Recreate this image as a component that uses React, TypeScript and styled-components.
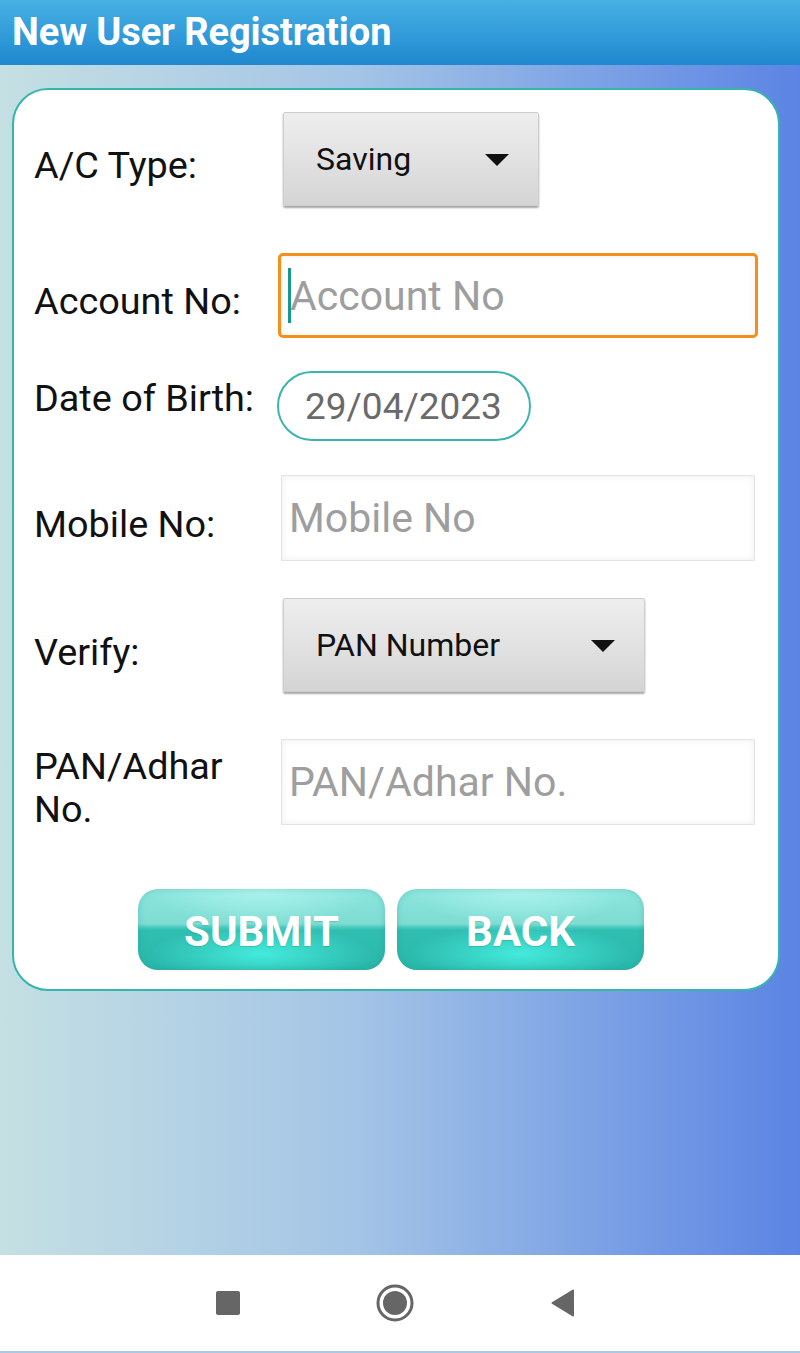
import React from 'react'
import styled, { createGlobalStyle } from 'styled-components'

const GlobalStyle = createGlobalStyle`
    html, body {
        margin: 0;
        padding: 0;
    }
    body {
        font-family: Roboto, 'Noto Sans', sans-serif;
    }
`

const Screen = styled.div`
    width: 800px;
    height: 1353px;
    display: flex;
    flex-direction: column;
    overflow: hidden;
`

const Header = styled.header`
    height: 65px;
    flex-shrink: 0;
    background: linear-gradient(to bottom, #47b1e4 0%, #2f98d8 60%, #1f88cf 100%);
    display: flex;
    align-items: center;
    padding-left: 12px;
    box-sizing: border-box;
`

const Title = styled.h1`
    margin: 0;
    color: white;
    font-size: 38px;
    font-weight: 700;
    letter-spacing: -0.1px;
    line-height: 1;
    padding-bottom: 2px;
`

const Main = styled.main`
    flex: 1;
    background: linear-gradient(to right, #c4e0e3 0%, #a3c4e6 45%, #5b84e4 100%);
    padding-top: 23px;
    padding-left: 12px;
    box-sizing: border-box;
`

const Card = styled.section`
    width: 768px;
    box-sizing: border-box;
    background: white;
    border: 2px solid #36b5ad;
    border-radius: 36px;
    padding: 22px 0 19px 20px;
`

const Row = styled.div<{ $top: number }>`
    display: grid;
    grid-template-columns: 247px auto;
    align-items: center;
    margin-top: ${p => p.$top}px;
`

const Label = styled.div<{ $shift: number }>`
    font-size: 37.8px;
    line-height: 43px;
    color: #111;
    position: relative;
    top: ${p => p.$shift}px;
`

const Spinner = styled.div<{ $width: number }>`
    width: ${p => p.$width}px;
    height: 94px;
    margin-left: 2px;
    box-sizing: border-box;
    border: 1px solid #cdcdcd;
    border-radius: 2px;
    background: linear-gradient(to bottom, #eeeeee 0%, #e2e2e2 50%, #d4d4d4 100%);
    box-shadow: 0 2px 2px rgba(0, 0, 0, 0.35);
    display: flex;
    align-items: center;
    justify-content: space-between;
    padding: 0 29px 0 32px;
    font-size: 32px;
    color: #111;
`

const Arrow = styled.span`
    width: 0;
    height: 0;
    border-left: 12px solid transparent;
    border-right: 12px solid transparent;
    border-top: 12px solid #111;
    margin-top: 2px;
`

const TextBox = styled.div<{ $focused?: boolean }>`
    width: ${p => (p.$focused ? 480 : 474)}px;
    height: ${p => (p.$focused ? 85 : 86)}px;
    margin-left: ${p => (p.$focused ? -3 : 0)}px;
    box-sizing: border-box;
    border: ${p => (p.$focused ? '3px solid #f48f1a' : '1px solid #e3e3e3')};
    border-radius: ${p => (p.$focused ? 5 : 1)}px;
    box-shadow: inset 0 0 7px rgba(0, 0, 0, 0.07);
    background: white;
    display: flex;
    align-items: center;
    padding-left: 7px;
    font-size: 41px;
    color: #9e9e9e;
`

const Caret = styled.span`
    width: 3px;
    height: 55px;
    background: #14998a;
    margin-right: -1px;
    flex-shrink: 0;
`

const DatePill = styled.div`
    width: 254px;
    height: 70px;
    margin-left: -4px;
    box-sizing: border-box;
    border: 2px solid #3ab4ae;
    border-radius: 35px;
    display: flex;
    align-items: center;
    padding-left: 26px;
    font-size: 37px;
    color: #6a6a6a;
`

const ButtonRow = styled.div`
    display: flex;
    gap: 12px;
    margin-top: 64px;
    padding-left: 104px;
`

const GlossButton = styled.button`
    width: 247px;
    height: 81px;
    border: none;
    border-radius: 20px;
    font-family: Roboto, sans-serif;
    font-size: 42px;
    font-weight: 700;
    color: white;
    text-shadow: 0 1px 1px rgba(0, 0, 0, 0.12);
    background:
        radial-gradient(ellipse 45% 35% at 50% 80%, rgba(70, 240, 225, 0.9) 0%, rgba(70, 240, 225, 0) 100%),
        radial-gradient(ellipse 45% 45% at 50% 0%, rgba(180, 248, 240, 0.8) 0%, rgba(180, 248, 240, 0) 100%),
        linear-gradient(to bottom, #8ce6de 0%, #7edcd3 43%, #4ccbbf 47%, #30beb1 51%, #2ab8ab 100%);
    box-shadow: inset 0 0 6px rgba(20, 120, 110, 0.25);
    padding: 4px 0 0;
    cursor: pointer;
`

const NavBar = styled.nav`
    height: 98px;
    flex-shrink: 0;
    background: white;
    display: flex;
    align-items: center;
    padding-left: 216px;
    gap: 136px;
    box-sizing: border-box;
    border-bottom: 2px solid #a9c8ea;
`

const RecentKey = styled.span`
    width: 24px;
    height: 24px;
    border-radius: 2px;
    background: #666;
`

const HomeKey = () => (
    <svg width="38" height="38" viewBox="0 0 38 38">
        <circle cx="19" cy="19" r="17" fill="none" stroke="#666" strokeWidth="3" />
        <circle cx="19" cy="19" r="12" fill="#666" />
    </svg>
)

const BackKey = () => (
    <svg width="25" height="28" viewBox="0 0 25 28">
        <path d="M23 1.5 L2.5 14 L23 26.5 Z" fill="#666" stroke="#666" strokeWidth="2" strokeLinejoin="round" />
    </svg>
)

export default function App() {
    return (
        <Screen>
            <GlobalStyle />
            <Header>
                <Title>New User Registration</Title>
            </Header>
            <Main>
                <Card>
                    <Row $top={0}>
                        <Label $shift={6}>A/C Type:</Label>
                        <Spinner $width={256}>
                            Saving
                            <Arrow />
                        </Spinner>
                    </Row>
                    <Row $top={47}>
                        <Label $shift={6}>Account No:</Label>
                        <TextBox $focused>
                            <Caret />
                            Account No
                        </TextBox>
                    </Row>
                    <Row $top={33}>
                        <Label $shift={-8}>Date of Birth:</Label>
                        <DatePill>29/04/2023</DatePill>
                    </Row>
                    <Row $top={34}>
                        <Label $shift={6}>Mobile No:</Label>
                        <TextBox>Mobile No</TextBox>
                    </Row>
                    <Row $top={37}>
                        <Label $shift={7}>Verify:</Label>
                        <Spinner $width={362}>
                            PAN Number
                            <Arrow />
                        </Spinner>
                    </Row>
                    <Row $top={47}>
                        <Label $shift={6}>PAN/Adhar No.</Label>
                        <TextBox>PAN/Adhar No.</TextBox>
                    </Row>
                    <ButtonRow>
                        <GlossButton>SUBMIT</GlossButton>
                        <GlossButton>BACK</GlossButton>
                    </ButtonRow>
                </Card>
            </Main>
            <NavBar>
                <RecentKey />
                <HomeKey />
                <BackKey />
            </NavBar>
        </Screen>
    )
}
